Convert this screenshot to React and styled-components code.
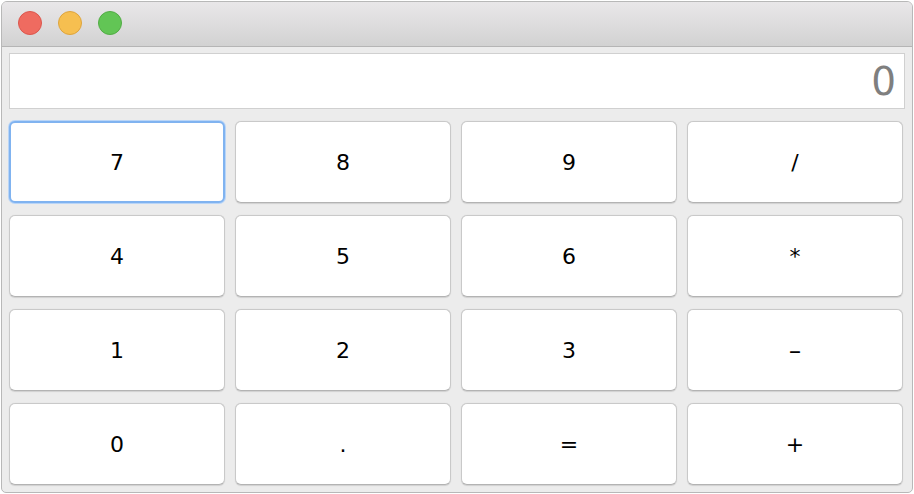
import React from "react";
import styled, { createGlobalStyle } from "styled-components";

const Global = createGlobalStyle`
  html, body { margin: 0; padding: 0; background: #ffffff; }
  body { font-family: "DejaVu Sans", "Liberation Sans", sans-serif; }
  * { box-sizing: border-box; }
`;

const Window = styled.div`
  margin: 1px 0 0 1px;
  width: 912px;
  height: 492px;
  border: 1px solid #b8b8b8;
  border-radius: 6px 6px 5px 5px;
  overflow: hidden;
  display: flex;
  flex-direction: column;
  background: #ececec;
`;

const TitleBar = styled.div`
  height: 45px;
  flex: none;
  display: flex;
  align-items: center;
  gap: 16px;
  padding-left: 16px;
  padding-bottom: 2px;
  background: linear-gradient(#e9e7e9, #d2d2d2);
  border-bottom: 1px solid #b5b5b5;
`;

const Light = styled.span`
  width: 24px;
  height: 24px;
  border-radius: 50%;
  background: ${(p) => p.$fill};
  border: 1px solid ${(p) => p.$stroke};
`;

const Content = styled.div`
  flex: 1;
  padding: 6px 7px 7px 7px;
  display: flex;
  flex-direction: column;
  gap: 12px;
`;

const Display = styled.div`
  height: 56px;
  width: 896px;
  background: #ffffff;
  border: 1px solid #d0d0d0;
  display: flex;
  align-items: center;
  justify-content: flex-end;
  padding-right: 8px;
  font-size: 39px;
  color: #7f7f7f;
  font-family: "DejaVu Sans", "Liberation Sans", sans-serif;
`;

const Grid = styled.div`
  display: grid;
  grid-template-columns: repeat(4, 216px);
  grid-auto-rows: 82px;
  column-gap: 10px;
  row-gap: 12px;
`;

const Key = styled.button`
  background: #ffffff;
  border: 1px solid #c9c9c9;
  border-bottom-color: #b3b3b3;
  border-radius: 6px;
  box-shadow: 0 0.5px 1px rgba(0, 0, 0, 0.12);
  font-family: "DejaVu Sans", "Liberation Sans", sans-serif;
  font-size: 22px;
  color: #000000;
  display: flex;
  align-items: center;
  justify-content: center;
  padding: 0;
  outline: none;
  ${(p) =>
    p.$focused &&
    `
    border: 2px solid #80b3f0;
    box-shadow: 0 0 0 1px #b9d5f7;
  `}
`;

const Label = styled.span`
  display: inline-block;
  transform: ${(p) => (p.$stretch ? "scaleX(1.7)" : "none")};
`;

const keys = ["7", "8", "9", "/", "4", "5", "6", "*", "1", "2", "3", "-", "0", ".", "=", "+"];

export default function App() {
  return (
    <>
      <Global />
      <Window>
        <TitleBar>
          <Light $fill="#ef6b60" $stroke="#dc564d" />
          <Light $fill="#f6bf50" $stroke="#dea43d" />
          <Light $fill="#62c555" $stroke="#52ac45" />
        </TitleBar>
        <Content>
          <Display>0</Display>
          <Grid>
            {keys.map((k, i) => (
              <Key key={i} $focused={i === 0}>
                <Label $stretch={k === "-"}>{k}</Label>
              </Key>
            ))}
          </Grid>
        </Content>
      </Window>
    </>
  );
}
